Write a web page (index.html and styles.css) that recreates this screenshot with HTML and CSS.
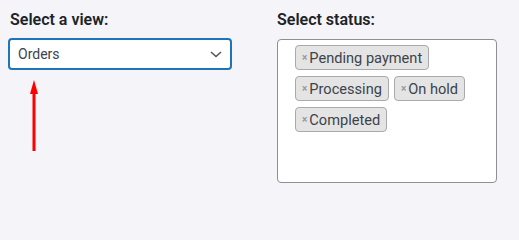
FILE: index.html
```html
<!DOCTYPE html>
<html>
<head>
<meta charset="utf-8">
<link rel="stylesheet" href="styles.css">
</head>
<body>
<div class="wrap">
  <div class="col col-view">
    <div class="label">Select a view:</div>
    <div class="select">
      <span class="select-value">Orders</span>
      <svg class="chev" width="12" height="7" viewBox="0 0 12 7"><path d="M1 1 L6 5.5 L11 1" fill="none" stroke="#50575e" stroke-width="1.6"/></svg>
    </div>
    <svg class="arrow" width="10" height="72" viewBox="0 0 10 72">
      <polygon points="5,0 9,14 1,14" fill="#ff0000"/>
      <rect x="3.5" y="12" width="3" height="59" fill="#ff0000"/>
    </svg>
  </div>
  <div class="col col-status">
    <div class="label label-status">Select status:</div>
    <div class="multi">
      <span class="tag"><span class="x">×</span>Pending payment</span>
      <span class="tag"><span class="x">×</span>Processing</span>
      <span class="tag"><span class="x">×</span>On hold</span>
      <span class="tag"><span class="x">×</span>Completed</span>
    </div>
  </div>
</div>
</body>
</html>
```
FILE: styles.css
```css
html, body {
  margin: 0;
  padding: 0;
  background: #f4f4f9;
}
body {
  font-family: Roboto, "Liberation Sans", sans-serif;
  color: #1d2327;
}
.wrap {
  display: flex;
  gap: 45px;
  padding: 10px 8px 0 8px;
}
.col-view {
  width: 224px;
  display: flex;
  flex-direction: column;
}
.col-status {
  width: 220px;
  display: flex;
  flex-direction: column;
}
.label {
  font-size: 16px;
  font-weight: 600;
  line-height: 20px;
  padding-left: 2px;
  margin-bottom: 8px;
  color: #1d2327;
}
.label-status {
  padding-left: 0;
  margin-bottom: 9px;
}
.select {
  box-sizing: border-box;
  height: 32px;
  border: 2px solid #1e74b6;
  border-radius: 4px;
  background: #fff;
  display: flex;
  align-items: center;
  justify-content: space-between;
  padding: 0 8px 0 8px;
}
.select-value {
  font-size: 14px;
  color: #3c434a;
}
.chev {
  display: block;
  margin-top: 1px;
}
.arrow {
  display: block;
  margin-top: 10px;
  margin-left: 21px;
}
.multi {
  box-sizing: border-box;
  height: 144px;
  border: 1px solid #8c8f94;
  border-radius: 4px;
  background: #fff;
  display: flex;
  flex-wrap: wrap;
  align-content: flex-start;
  gap: 6px 5px;
  padding: 5px 10px 0 17px;
}
.tag {
  box-sizing: border-box;
  height: 25px;
  display: inline-flex;
  align-items: center;
  background: #e4e4e4;
  border: 1px solid #aaa;
  border-radius: 4px;
  padding: 0 6px 0 6px;
  font-size: 14.6px;
  color: #3c434a;
}
.x {
  font-size: 10px;
  font-weight: 700;
  color: #999;
  margin-right: 2px;
}
```
